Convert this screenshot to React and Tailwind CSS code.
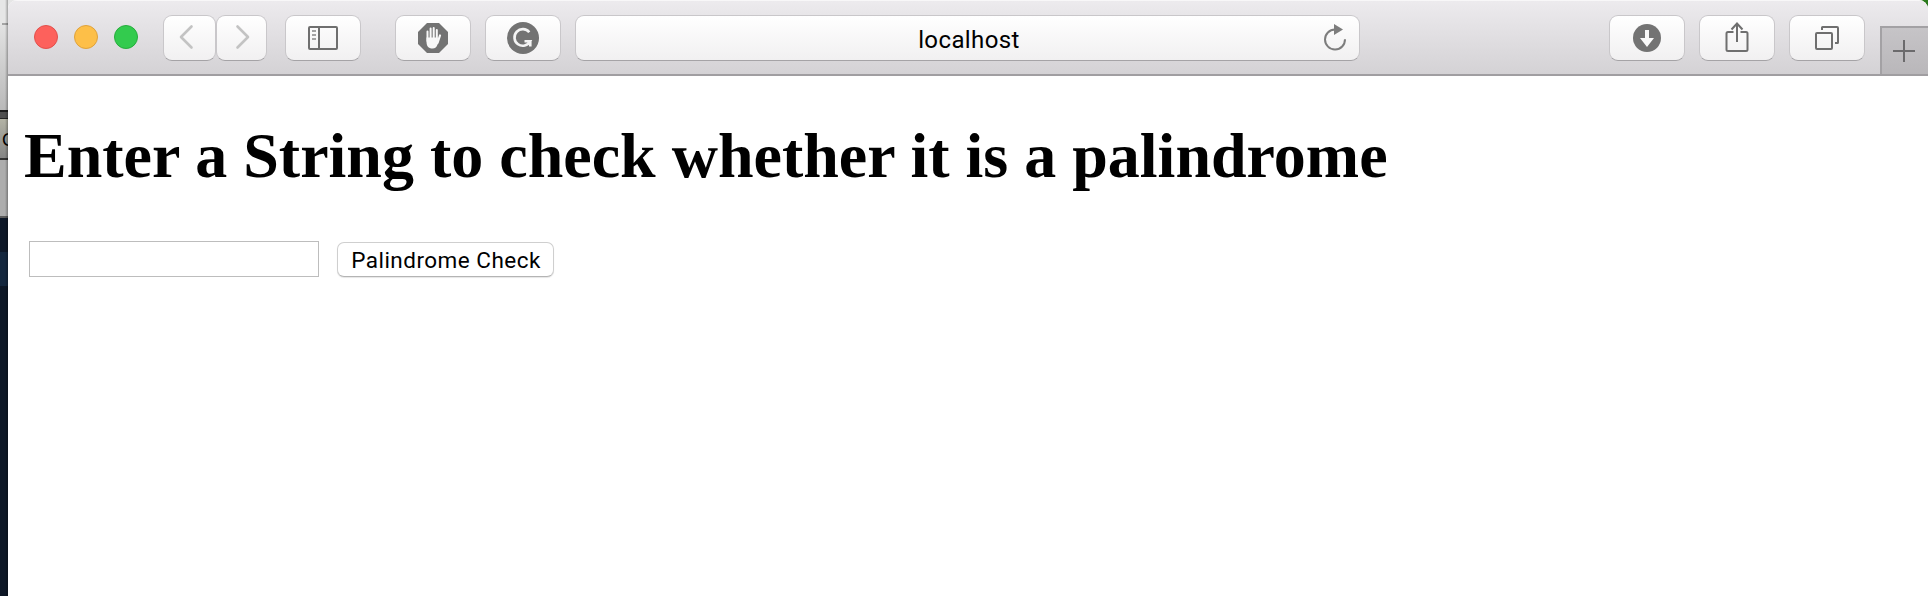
const btn =
  "box-border flex h-[46px] shrink-0 items-center justify-center rounded-[9px] border border-[#c9c7ca] border-b-[#a5a3a6] bg-linear-to-b from-white to-[#f1f0f1]";

function Light({ className }) {
  return <span className={"size-6 rounded-full border " + className} />;
}

function BackgroundStrip() {
  return (
    <div className="relative flex h-full w-2 shrink-0 flex-col overflow-hidden">
      <div className="h-[23px] shrink-0 bg-[#e6e6e6]" />
      <div className="ml-[2px] h-[2px] shrink-0 bg-[#a4a4a4]" />
      <div className="h-[85px] shrink-0 bg-linear-to-b from-[#e2e2e2] to-[#b9b9b9]" />
      <div className="h-[2px] shrink-0 bg-[#1e1e1e]" />
      <div className="h-[6px] shrink-0 bg-[#505050]" />
      <div className="h-[1px] shrink-0 bg-[#252525]" />
      <div className="flex h-[39px] shrink-0 items-center overflow-hidden bg-linear-to-b from-[#b3b3a5] to-[#858585] pl-[2px] pt-[3px] font-['Liberation_Sans',sans-serif] text-[18px] text-black">
        C
      </div>
      <div className="h-[2px] shrink-0 bg-[#333]" />
      <div className="h-[56px] shrink-0 bg-[#adadad]" />
      <div className="h-[2px] shrink-0 bg-[#5b5b5b]" />
      <div className="h-[34px] shrink-0 bg-[#0e1828]" />
      <div className="h-[34px] shrink-0 bg-[#14273e]" />
      <div className="grow bg-[#0d1726]" />
      <div className="absolute inset-y-0 right-0 w-[3px] bg-linear-to-r from-transparent to-black/30" />
    </div>
  );
}

function Toolbar() {
  return (
    <header className="flex h-[76px] shrink-0 items-start border-b-2 border-[#a09ea1] bg-linear-to-b from-[#edebee] to-[#d4d2d5] shadow-[inset_0_1px_0_#f8f7f8]">
      <div className="ml-[26px] mt-[25px] flex gap-4">
        <Light className="border-[#e2504c] bg-[#fd615c]" />
        <Light className="border-[#dfa23c] bg-[#fdbf48]" />
        <Light className="border-[#27ad3d] bg-[#33cb4e]" />
      </div>
      <div className="ml-[25px] mt-[15px] flex">
        <button className={btn + " w-[53px]"}>
          <svg width="16" height="26" viewBox="0 0 16 26" className="-ml-[7px] -mt-0.5" fill="none" stroke="#c3c3c3" strokeWidth="2.6" strokeLinecap="round" strokeLinejoin="round">
            <path d="M13.500 2.500 3 13l10.500 10.500" />
          </svg>
        </button>
        <button className={btn + " w-[51px]"}>
          <svg width="16" height="26" viewBox="0 0 16 26" className="ml-0.5 -mt-0.5" fill="none" stroke="#c3c3c3" strokeWidth="2.600" strokeLinecap="round" strokeLinejoin="round">
            <path d="m2.500 2.500 10.500 10.500L2.500 23.500" />
          </svg>
        </button>
      </div>
      <button className={btn + " ml-[18px] mt-[15px] w-[76px]"}>
        <svg width="30" height="24" viewBox="0 0 30 24">
          <rect x="1" y="1" width="28" height="22" rx="1" fill="none" stroke="#6f6f6f" strokeWidth="2" />
          <path d="M11 1v22" stroke="#6f6f6f" strokeWidth="2" />
          <path d="M4 5h4M4 9h4M4 13h4" stroke="#a3a3a3" strokeWidth="2" />
        </svg>
      </button>
      <button className={btn + " ml-[34px] mt-[15px] w-[76px]"}>
        <svg width="30" height="30" viewBox="0 0 30 30">
          <path d="M9 0h12l9 9v12l-9 9H9l-9-9V9z" fill="#737373" />
          <g stroke="#f8f8f8" strokeWidth="2" strokeLinecap="round" fill="none">
            <path d="M9.500 8.500V18M12.600 5.500V16M15.700 5V16M18.800 7V18" />
            <path d="M22 12.500 19.500 20" strokeWidth="2.200" />
          </g>
          <path d="M8.500 14.500h11.300v3.500l1.200-1-1.500 4.500c-.8 2.600-2.300 4-4.900 4-4.300 0-6.100-2.600-6.100-7z" fill="#f8f8f8" />
        </svg>
      </button>
      <button className={btn + " ml-[14px] mt-[15px] w-[76px]"}>
        <svg width="32" height="32" viewBox="0 0 32 32">
          <circle cx="16" cy="16" r="16" fill="#737373" />
          <path d="M22.300 10.300A8.300 8.300 0 1 0 23.200 19.200H17.500M23.300 18.200V24.500" fill="none" stroke="#f4f4f4" strokeWidth="2.600" />
        </svg>
      </button>
      <div className={btn + " relative ml-[14px] mt-[15px] w-[785px]"}>
        <span className="pl-[3px] pt-[3px] font-[Roboto,sans-serif] text-[24px] leading-[30px] tracking-[0.400px] text-black">localhost</span>
        <svg width="24" height="28" viewBox="0 0 24 28" className="absolute right-[12px] top-[7px]">
          <path d="M12 6.500A10 10 0 1 0 22 16.300" fill="none" stroke="#7d7d7d" strokeWidth="2" />
          <path d="M11 1v11l9-5.500z" fill="#7d7d7d" />
        </svg>
      </div>
      <div className="ml-auto mt-[15px] flex gap-[14px]">
        <button className={btn + " w-[76px]"}>
          <svg width="28" height="28" viewBox="0 0 28 28">
            <circle cx="14" cy="14" r="14" fill="#737373" />
            <path d="M12 6h4v8h5l-7 9-7-9h5z" fill="#fafafa" />
          </svg>
        </button>
        <button className={btn + " w-[76px]"}>
          <svg width="24" height="32" viewBox="0 0 24 32" className="-mt-0.5" fill="none" stroke="#6f6f6f" strokeWidth="2">
            <path d="M8.500 11H3a1.500 1.500 0 0 0-1.500 1.500v16A1.500 1.500 0 0 0 3 30h18a1.500 1.500 0 0 0 1.500-1.500v-16A1.500 1.500 0 0 0 21 11h-5.500M12 21V2M6.500 8.500 12 2.500l5.500 6" />
          </svg>
        </button>
        <button className={btn + " w-[76px]"}>
          <svg width="24" height="24" viewBox="0 0 24 24" fill="none" stroke="#6f6f6f" strokeWidth="2">
            <rect x="1" y="7" width="16" height="16" rx="1" />
            <path d="M7 4V1.500A.5.500 0 0 1 7.500 1H22a1 1 0 0 1 1 1v14.500a.5.500 0 0 1-.5.500H20" />
          </svg>
        </button>
      </div>
      <button className="ml-[15px] mt-[26px] flex h-12 w-12 items-center justify-center border-l-2 border-t-2 border-[#a3a1a4] bg-linear-to-b from-[#c6c4c7] to-[#b9b7ba]">
        <svg width="22" height="22" viewBox="0 0 22 22" className="-ml-0.5">
          <path d="M11 0v22M0 11h22" stroke="#6b6a6c" strokeWidth="2" />
        </svg>
      </button>
    </header>
  );
}

export default function App() {
  return (
    <div className="flex h-[596px] w-[1928px] overflow-hidden bg-[linear-gradient(to_right,#e6e6e6_50%,#2a7a1c_50%)]">
      <BackgroundStrip />
      <div className="flex min-w-0 grow flex-col overflow-hidden rounded-t-[9px] bg-white">
        <Toolbar />
        <main className="px-4 text-black">
          <h1 className="mt-[43px] whitespace-nowrap font-['Liberation_Serif',serif] text-[64px] font-bold leading-[74px]">
            Enter a String to check whether it is a palindrome
          </h1>
          <form className="ml-[5px] mt-[48px] flex items-center gap-[18px]">
            <input aria-label="String" className="h-9 w-[290px] border border-[#bdbdbd] bg-white px-2 outline-none" />
            <button type="button" className="flex h-[35px] w-[217px] items-center justify-center whitespace-nowrap rounded-[7px] border border-[#cfcfcf] border-b-[#b4b4b4] bg-white pt-px pl-px font-[Roboto,sans-serif] text-[22.500px] leading-8 tracking-[0.480px] shadow-[0_1px_1px_#0000001a]">
              Palindrome Check
            </button>
          </form>
        </main>
      </div>
    </div>
  );
}
